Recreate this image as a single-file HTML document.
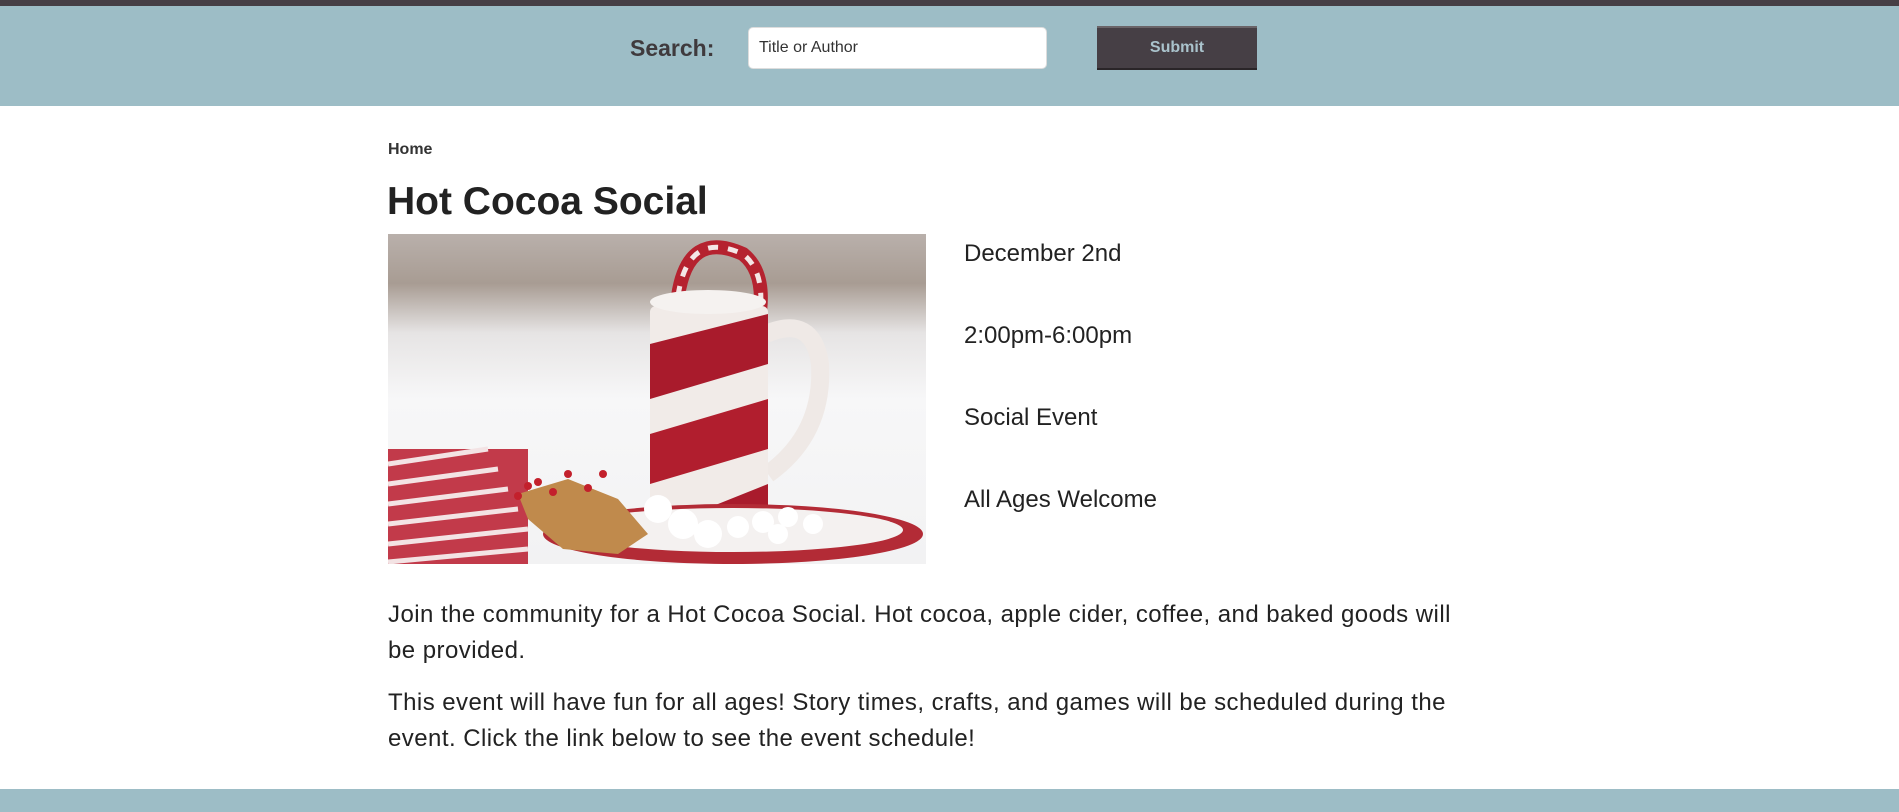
<!DOCTYPE html>
<html><head><meta charset="utf-8"><style>
html,body{margin:0;padding:0;background:#fff;width:1899px;height:812px;overflow:hidden;font-family:"Liberation Sans",sans-serif;color:#222}
.top{position:absolute;left:0;top:0;width:1899px;height:6px;background:#463f45}
.hdr{position:absolute;left:0;top:6px;width:1899px;height:100px;background:#9dbdc6}
.lbl{position:absolute;left:630px;top:29px;font-size:23px;font-weight:bold;color:#3f3a3d}
.inp{position:absolute;left:748px;top:21px;width:299px;height:42px;background:#fff;border-radius:5px;box-sizing:border-box;border:1px solid #ddd;font-size:16px;color:#333;padding:11px 0 0 10px}
.btn{position:absolute;left:1097px;top:20px;width:160px;height:44px;background:#463f45;box-sizing:border-box;border-top:2px solid #6a6468;border-bottom:2px solid #2a2528;color:#aac3cc;font-weight:bold;font-size:16px;text-align:center;line-height:40px}
.home{position:absolute;left:388px;top:141px;font-size:16px;font-weight:bold;color:#333}
h1{position:absolute;left:387px;top:180px;margin:0;font-size:39px;font-weight:bold;color:#222}
.img{position:absolute;left:388px;top:234px}
.side{position:absolute;left:964px;font-size:24px;color:#222}
.p{position:absolute;left:388px;font-size:24px;line-height:36px;color:#222;white-space:nowrap;letter-spacing:.45px}
.ftr{position:absolute;left:0;top:789px;width:1899px;height:23px;background:#9dbdc6}
</style></head><body>
<div class="top"></div>
<div class="hdr"><div class="lbl">Search:</div><div class="inp">Title or Author</div><div class="btn">Submit</div></div>
<div class="home">Home</div>
<h1>Hot Cocoa Social</h1>
<svg class="img" width="538" height="330" viewBox="0 0 538 330">
<defs>
<linearGradient id="bg" x1="0" y1="0" x2="0" y2="1"><stop offset="0" stop-color="#b9b0ab"/><stop offset=".15" stop-color="#a89c93"/><stop offset=".3" stop-color="#e6e4e4"/><stop offset=".5" stop-color="#f7f7f8"/><stop offset="1" stop-color="#f2f2f3"/></linearGradient>
<clipPath id="mug"><rect x="262" y="72" width="118" height="210" rx="6"/></clipPath>
</defs>
<rect width="538" height="330" fill="url(#bg)"/>
<path d="M290 62 Q300 -5 355 20 Q380 40 370 90" fill="none" stroke="#b5222f" stroke-width="14"/>
<path d="M290 62 Q300 -5 355 20 Q380 40 370 90" fill="none" stroke="#f4e6e6" stroke-width="5" stroke-dasharray="10 10"/>
<path d="M378 100 Q425 80 432 130 Q436 200 380 240" fill="none" stroke="#efe9e6" stroke-width="18"/>
<g clip-path="url(#mug)"><rect x="262" y="72" width="118" height="210" fill="#f1ebe8"/>
<polygon points="262,110 380,80 380,130 262,165" fill="#a91b2c"/>
<polygon points="262,200 380,165 380,215 262,250" fill="#b11e2e"/>
<polygon points="300,282 380,250 380,282" fill="#a91b2c"/></g>
<ellipse cx="320" cy="68" rx="58" ry="12" fill="#f5f2f0"/>
<rect x="0" y="215" width="140" height="115" fill="#c23a4a"/>
<g stroke="#f3e3e4" stroke-width="5"><line x1="0" y1="230" x2="100" y2="215"/><line x1="0" y1="250" x2="110" y2="235"/><line x1="0" y1="270" x2="120" y2="255"/><line x1="0" y1="290" x2="130" y2="275"/><line x1="0" y1="310" x2="140" y2="295"/><line x1="0" y1="328" x2="140" y2="315"/></g>
<ellipse cx="345" cy="300" rx="190" ry="30" fill="#b32b36"/>
<ellipse cx="345" cy="296" rx="170" ry="22" fill="#f4f1f0"/>
<path d="M130 260 L180 245 L230 265 L260 300 L230 320 L175 315 L140 285Z" fill="#c08a4c"/>
<g fill="#fff"><circle cx="270" cy="275" r="14"/><circle cx="295" cy="290" r="15"/><circle cx="320" cy="300" r="14"/><circle cx="350" cy="293" r="11"/><circle cx="375" cy="288" r="11"/><circle cx="400" cy="283" r="10"/><circle cx="425" cy="290" r="10"/><circle cx="390" cy="300" r="10"/></g>
<g fill="#c3202c"><circle cx="130" cy="262" r="4"/><circle cx="140" cy="252" r="4"/><circle cx="150" cy="248" r="4"/><circle cx="165" cy="258" r="4"/><circle cx="180" cy="240" r="4"/><circle cx="200" cy="254" r="4"/><circle cx="215" cy="240" r="4"/></g>
</svg>
<div class="side" style="top:240px">December 2nd</div>
<div class="side" style="top:322px">2:00pm-6:00pm</div>
<div class="side" style="top:404px">Social Event</div>
<div class="side" style="top:486px">All Ages Welcome</div>
<div class="p" style="top:597px">Join the community for a Hot Cocoa Social. Hot cocoa, apple cider, coffee, and baked goods will<br>be provided.</div>
<div class="p" style="top:685px">This event will have fun for all ages! Story times, crafts, and games will be scheduled during the<br>event. Click the link below to see the event schedule!</div>
<div class="ftr"></div>
</body></html>
